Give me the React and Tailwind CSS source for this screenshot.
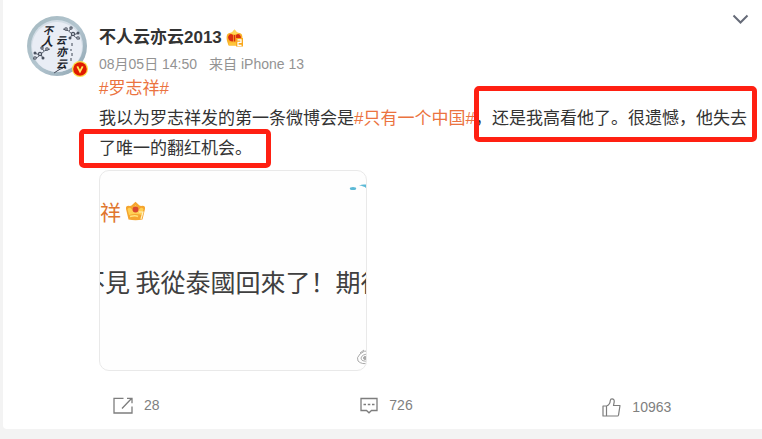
const fonts = "font-['Liberation_Sans','Noto_Sans_CJK_SC',sans-serif]";

function Blossom({ x, y, flip }) {
  return (
    <g transform={`translate(${x} ${y}) scale(${flip ? -1 : 1} 1)`}>
      <path d="M0 2 Q6 3 9 7 T17 12 M6 4 L9 0 M10 8 L16 6 M9 7 L7 12" fill="none" stroke="#59616e" strokeWidth="1" />
      <g fill="#4b5260">
        <circle cx="3" cy="2" r="1.8" />
        <circle cx="8" cy="1" r="1.7" />
        <circle cx="10" cy="7" r="2.2" />
        <circle cx="15" cy="6" r="1.5" />
        <circle cx="7" cy="11" r="1.5" />
        <circle cx="15" cy="11" r="1.8" />
      </g>
      <circle cx="3" cy="2" r="0.7" fill="#e8edf5" />
      <circle cx="8" cy="1" r="0.6" fill="#e8edf5" />
      <circle cx="10" cy="7" r="0.9" fill="#e8edf5" />
      <circle cx="15" cy="11" r="0.7" fill="#e8edf5" />
    </g>
  );
}

function Avatar() {
  return (
    <div className="relative h-[60px] w-[60px] shrink-0">
      <svg viewBox="0 0 60 60" className="h-[60px] w-[60px]" role="img" aria-label="不人云亦云2013">
        <defs>
          <linearGradient id="ring" x1="0" y1="0" x2="1" y2="1">
            <stop offset="0" stopColor="#a3b8bf" />
            <stop offset="0.5" stopColor="#b3c5cf" />
            <stop offset="1" stopColor="#8fa5b2" />
          </linearGradient>
        </defs>
        <circle cx="30" cy="30" r="30" fill="url(#ring)" />
        <circle cx="30" cy="30" r="26" fill="#d3dde6" />
        <circle cx="30" cy="31" r="25" fill="#e9edf5" />
        <Blossom x={36} y={11} />
        <Blossom x={23} y={31} flip />
        <g fill="#20242c" fontFamily="'Noto Sans CJK SC', sans-serif" fontWeight="bold" fontStyle="italic">
          <text x="16" y="18" fontSize="10">不</text>
          <text x="14" y="30" fontSize="12">人</text>
          <text x="29" y="28" fontSize="10">云</text>
          <text x="29" y="40" fontSize="11">亦</text>
          <text x="29" y="52" fontSize="11">云</text>
        </g>
        <path d="M36 52 Q33 53 30 55 T27 57 M45 27v3M44 33v2M45 37v3M44 42v3" fill="none" stroke="#3f4654" strokeWidth="1" />
      </svg>
      <svg viewBox="0 0 16 16" className="absolute -right-px -bottom-px h-4 w-4" aria-hidden="true">
        <circle cx="8" cy="8" r="8" fill="#fbe04a" />
        <circle cx="8" cy="8" r="6.8" fill="#e01a00" />
        <path d="M5.3 5.3 8 10.6l2.7-5.3" fill="none" stroke="#ffed5c" strokeWidth="1.8" />
      </svg>
    </div>
  );
}

function MemberCrown() {
  return (
    <svg viewBox="0 0 17 18" className="h-[18px] w-[17px]" aria-hidden="true">
      <path d="M2.5 16.500 1 12Q-.5 4.500 3.500 4L6 3.500 8.500.5 11 3.500l2.500.5Q17.500 4.500 16 12l-1.500 4.500Z" fill="#f9b32b" />
      <path d="M4 4.200 6 3.500 8.500.5 11 3.500l2 .7-4.500 1.300Z" fill="#ffd65a" />
      <path d="M2 8Q3.500 3.500 7 6v6.500Q2.500 12.500 2 8ZM15 8Q13.500 3.500 10 6v6.500Q14.500 12.500 15 8Z" fill="#d92d12" />
      <path d="M7.700 6h1.600v6.500H7.700Z" fill="#d92d12" />
      <path d="M3 13.500h11v3H3Z" fill="#ffc53a" />
      <path d="M10 9h7v8.500h-7Z" fill="#f9a81d" />
      <path d="M11.500 10.800h3.500v2.500h-3v3h3.500" fill="none" stroke="#fff" strokeWidth="1.300" />
    </svg>
  );
}

function GoldCrown() {
  return (
    <svg viewBox="0 0 21 20" className="h-5 w-[21px]" aria-hidden="true">
      <path d="M3.500 18.500 1 8Q.5 4 5 5l1.500-.5L10.500.8l4 3.700 1.500.5Q20.500 4 20 8l-2.500 10.500Q10.500 20 3.500 18.500Z" fill="#f5a52f" />
      <path d="M4 14 2.500 8Q5 5.500 7 8.500L10.500 4l3.500 4.500Q16 5.500 18.500 8L17 14Q10.500 12 4 14Z" fill="#ffcf53" />
      <circle cx="10.500" cy="8.500" r="3" fill="#d9472e" />
      <path d="M5 15.500q5.500-1.500 8 0" stroke="#ffe27b" strokeWidth="1.500" fill="none" />
      <path d="M14 11h4l-2 7" fill="none" stroke="#fff0c0" strokeWidth="1.200" />
    </svg>
  );
}

function ShareIcon() {
  return (
    <svg viewBox="0 0 20 17" className="h-[17px] w-5" fill="none" stroke="#7d7d7d" strokeWidth="1.3" aria-hidden="true">
      <path d="M10.500 1.300H1v14.700h18V9.500M9 11.500 18.500 1.500M14 1.300h5v5" />
    </svg>
  );
}

function CommentIcon() {
  return (
    <svg viewBox="0 0 18 17" className="h-[17px] w-[18px]" fill="none" stroke="#7d7d7d" strokeWidth="1.3" aria-hidden="true">
      <path d="M1 1.500h16v12h-5.500L9 15.800l-2.500-2.300H1ZM3.500 7.500H6M7.800 7.500h2.500M12 7.500h2.500" />
    </svg>
  );
}

function LikeIcon() {
  return (
    <svg viewBox="0 0 19 19" className="h-[19px] w-[19px]" fill="none" stroke="#7d7d7d" strokeWidth="1.2" strokeLinejoin="round" aria-hidden="true">
      <path d="M1 8h3.500v10H1ZM4.500 8Q8 6.800 8.300 2.500 8.500.8 10 .8q2.500 0 2.200 3L11.500 7.500H18L16.500 17.200Q16.300 18 15.500 18h-11" />
    </svg>
  );
}

function Attachment() {
  return (
    <figure className="flex h-[201px] w-[268px] flex-col overflow-hidden rounded-[10px] border border-[#e9e9e9] bg-[#fefefe] font-['Noto_Sans_CJK_SC',sans-serif]">
      <div className="flex h-7 items-end justify-end">
        <svg viewBox="0 0 20 16" className="h-4 w-5" fill="#5bb9d6" aria-hidden="true">
          <ellipse cx="7" cy="5.500" rx="3.200" ry="1.500" />
          <path d="M13 2.500Q16 1 20 1.500V5q-2-2-7-2.500Z" />
        </svg>
      </div>
      <div className="flex h-6 items-center gap-1 text-[21px] leading-6 text-[#e0762f]">
        <span>祥</span>
        <GoldCrown />
      </div>
      <p className="-ml-5 mt-10 text-[25px] leading-9 whitespace-nowrap text-[#404040]">不見 我從泰國回來了！期待</p>
      <svg viewBox="0 0 18 18" className="-mr-2 mt-auto mb-1 h-[18px] w-[18px] self-end" fill="none" stroke="#a9a9a9" aria-hidden="true">
        <path d="M13 3Q8 2 4 6 0 10 2 13q4 4 11 2M13 6Q6 6 5 10q0 4 8 3M4 5l4-3" />
        <circle cx="9" cy="10" r="1.500" fill="#a9a9a9" />
      </svg>
    </figure>
  );
}

function Action({ label, count, className, children }) {
  return (
    <button type="button" aria-label={`${label} ${count}`} className={`flex h-5 items-center justify-center gap-[11px] ${className}`}>
      {children}
      <span>{count}</span>
    </button>
  );
}

export default function App() {
  return (
    <div className={`min-h-screen bg-[#f3f3f3] pb-[10px] pl-[3px] ${fonts}`}>
      <article className="rounded-bl bg-white pb-3">
        <header className="flex h-[74px] items-start pr-[13px] pl-6">
          <div className="pt-4">
            <Avatar />
          </div>
          <div className="flex-1 pt-[26px] pl-3">
            <h1 className="flex h-6 items-center gap-1 text-[17px] font-bold text-[#333333]">
              <a href="#user">不人云亦云2013</a>
              <MemberCrown />
            </h1>
            <p className="mt-1 flex gap-3 text-[14px] leading-5 text-[#939393]">
              <time>08月05日 14:50</time>
              <span>来自 iPhone 13</span>
            </p>
          </div>
          <button type="button" aria-label="更多" className="pt-[14px]">
            <svg viewBox="0 0 17 11" className="h-[11px] w-[17px]" fill="none" stroke="#666b78" strokeWidth="2" aria-hidden="true">
              <path d="m1.500 1.500 7 7 7-7" />
            </svg>
          </button>
        </header>

        <div className="relative pr-3 pl-24 text-[17px] leading-[30px] text-[#333333]">
          <p>
            <a href="#topic" className="text-[#eb7340]">#罗志祥#</a>
            <br />
            我以为罗志祥发的第一条微博会是
            <a href="#china" className="text-[#eb7340]">#只有一个中国#</a>
            ，还是我高看他了。很遗憾，他失去了唯一的翻红机会。
          </p>
          <div className="pointer-events-none absolute top-3 left-[471px] h-14 w-[283px] rounded-[5px] border-5 border-[#ff2012]" />
          <div className="pointer-events-none absolute top-[55px] left-[76px] h-[39px] w-48 rounded-[5px] border-5 border-[#ff2012]" />
        </div>

        <div className="pt-[6px] pl-24">
          <Attachment />
        </div>

        <footer className="mt-6 grid grid-cols-3 items-start pl-2 text-[14px] text-[#808080]">
          <Action label="转发" count="28" className="mb-[2px]">
            <ShareIcon />
          </Action>
          <Action label="评论" count="726" className="mb-[2px]">
            <CommentIcon />
          </Action>
          <Action label="赞" count="10963" className="mt-[2px]">
            <LikeIcon />
          </Action>
        </footer>
      </article>
    </div>
  );
}
